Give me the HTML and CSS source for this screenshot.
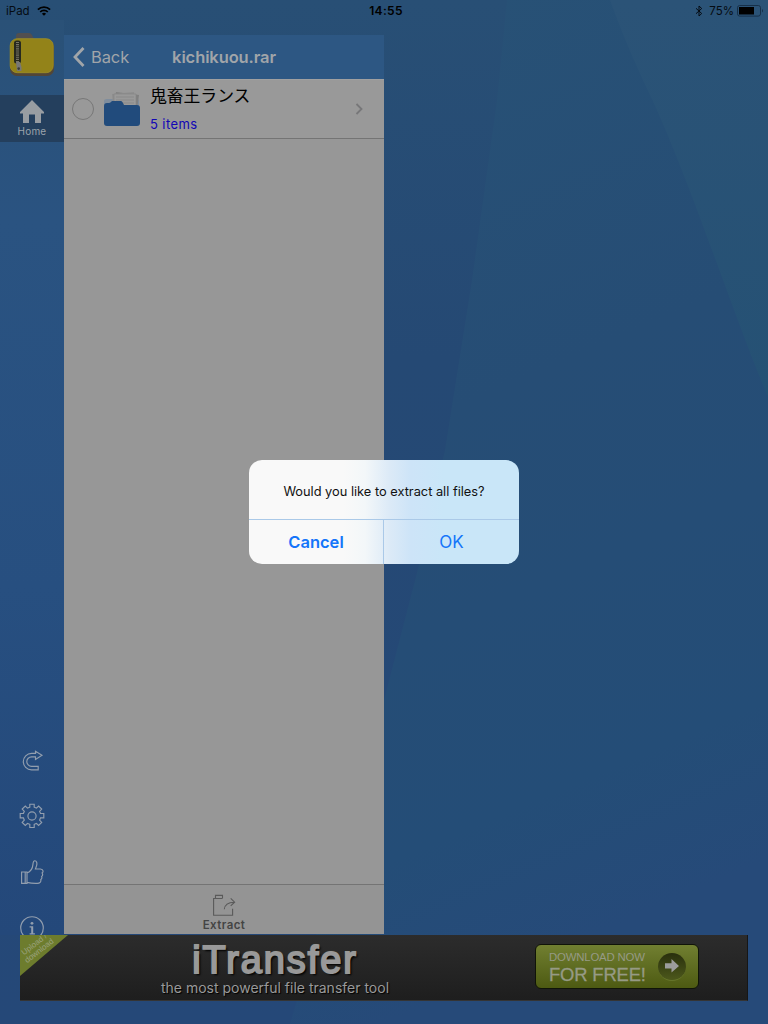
FILE: index.html
```html
<!DOCTYPE html>
<html lang="en">
<head>
<meta charset="utf-8">
<title>Archive browser</title>
<link rel="stylesheet" href="styles.css">
</head>
<body>
<div class="screen">
  <svg class="wallpaper" viewBox="0 0 768 1024" preserveAspectRatio="none">
    <defs>
      <linearGradient id="base" x1="0" y1="0" x2="0" y2="1"><stop offset="0" stop-color="#284f75"/><stop offset=".35" stop-color="#254974"/><stop offset="1" stop-color="#254878"/></linearGradient>
      <linearGradient id="mid" x1="0" y1="0" x2=".2" y2="1"><stop offset="0" stop-color="#285276"/><stop offset=".45" stop-color="#264d75"/><stop offset=".85" stop-color="#244d77"/><stop offset="1" stop-color="#264a79"/></linearGradient>
      <linearGradient id="corner" x1="0" y1="0" x2="0" y2="1"><stop offset="0" stop-color="#2b5377"/><stop offset="1" stop-color="#255174"/></linearGradient>
    </defs>
    <rect width="768" height="1024" fill="url(#base)"/>
    <path d="M507 0H768V1024H290L384 700L419 565L445 450L472 280L497 100Z" fill="url(#mid)"/>
    <path d="M610 0H768V397C735 320 690 180 650 95C632 57 620 28 610 0Z" fill="url(#corner)"/>
  </svg>

  <header class="status">
    <div class="status-side">
      <span>iPad</span>
      <svg class="wifi" width="14" height="10" viewBox="0 0 14 10" fill="none" stroke="#000"><path d="M.9 3.7a8.6 8.6 0 0 1 12.2 0" stroke-width="1.8"/><path d="M3.2 6a5.4 5.4 0 0 1 7.6 0" stroke-width="1.7"/><path d="M4.9 7.7a3 3 0 0 1 4.2 0L7 9.8Z" fill="#000" stroke="none"/></svg>
    </div>
    <span class="clock">14:55</span>
    <div class="status-side status-right">
      <svg width="8" height="12" viewBox="0 0 8 12" fill="none" stroke="#050b12"><path d="M1 3.3 6.7 8.5 4 11V1l2.7 2.5L1 8.7"/></svg>
      <span class="percent">75%</span>
      <svg width="27" height="12" viewBox="0 0 27 12"><rect x=".5" y=".5" width="23" height="10.6" rx="2.2" fill="none" stroke="#173049"/><rect x="2" y="2" width="15" height="7.5" fill="#000"/><path d="M25 4c1.3.5 1.3 3 0 3.5Z" fill="#173049"/></svg>
    </div>
  </header>

  <main class="main">
    <nav class="sidebar">
      <svg class="app-icon" width="46" height="44" viewBox="0 0 46 44">
        <path d="M7 9V4Q7 1 10 1h10q2 0 3 2l2 4v4Z" fill="#514f50"/>
        <rect x="1" y="8" width="44" height="36" rx="7" fill="#524637"/>
        <rect x="1.2" y="6.7" width="43" height="34" rx="7" fill="#938319" stroke="#a09126" stroke-width=".8"/>
        <rect x="5" y="8.5" width="7" height="23" rx="2.5" fill="#27291f"/>
        <path d="M8.5 10v20" stroke="#777464" stroke-width="3" stroke-dasharray="1 .9"/>
        <path d="M7 30h4l1.5 5v4H8Z" fill="#777"/><circle cx="9.7" cy="36.6" r="1.3" fill="#3a3b35"/>
      </svg>
      <div class="home">
        <svg width="26" height="25" viewBox="0 0 26 25"><path d="M13 1 1 13v1.5h3V24h6v-8.5h6V24h6v-9.5h3V13Z" fill="#989da2"/></svg>
        <span>Home</span>
      </div>
      <div class="tools">
        <svg width="24" height="24" viewBox="0 0 24 24"><path d="M15.5 2.2v2.2H11.5a8.2 8.2 0 0 0 0 16.4h6.7v-3.5h-6.7a4.7 4.7 0 0 1 0-9.4h4v2.5l6.5-4.1Z"/></svg>
        <svg width="26" height="26" viewBox="0 0 26 26"><path d="M10.8 1.2h4.4v3l2.2.9 2.2-2.1 3.1 3.1-2.1 2.2.9 2.2h3.3v4.4h-3.3l-.9 2.3 2.1 2.2-3.1 3.1-2.2-2.1-2.2.9v3.2h-4.4v-3.2l-2.3-.9-2.2 2.1-3.1-3.1 2.1-2.2-.9-2.3H1.2v-4.4h3.2l.9-2.2L3.2 6.1 6.3 3l2.2 2.1 2.3-.9Z"/><circle cx="13" cy="13" r="4.1"/></svg>
        <svg width="24" height="26" viewBox="0 0 24 26"><path d="M1.6 13H7v11.4H1.6ZM5.2 13v11.4M7 14c3.5-1.4 5.6-4.6 5.9-8.4.2-2.6.8-3.9 2-3.9 1.7 0 2.4 2.6 1.7 4.9L15.4 10h5c3.4.4 3 3.1 1.7 4 .8 1.3.4 2.8-.5 3.4.6 1.5.1 2.6-.8 3.2.4 2.4-1 3.8-3.5 3.8-4.8.2-7.1-.2-10.3-1"/></svg>
        <div class="info-clip"><svg width="26" height="26" viewBox="0 0 26 26"><circle cx="13" cy="13" r="11.3"/><circle class="solid" cx="13" cy="8.3" r="1.4"/><path class="solid" d="M10.6 11.3h3.6v7h1.7v1.1h-5.3v-1.1h1.6v-5.9h-1.6Z"/></svg></div>
      </div>
    </nav>

    <section class="panel">
      <div class="navbar">
        <div class="back"><svg width="14" height="22" viewBox="0 0 14 22"><path d="M11.5 2 3 11l8.5 9" fill="none" stroke="#a1a5a9" stroke-width="2.8"/></svg><span>Back</span></div>
        <h1>kichikuou.rar</h1>
      </div>
      <div class="row">
        <span class="check"></span>
        <svg class="folder" width="36" height="36" viewBox="0 0 36 36">
          <path d="M0 10Q0 8 3 8h30q2 0 2 3v9H0Z" fill="#7f8d9d"/>
          <path d="m12 1 23 3-2 14-23-3Z" fill="#808080"/><path d="M8 3 30 1l1 13H9Z" fill="#8e8e8e"/><path d="M10 3h22v14H10Z" fill="#999" stroke="#858585" stroke-width=".6"/>
          <path d="M12 6h18M12 9h18M12 12h18" stroke="#858585" stroke-width=".7"/>
          <path d="M0 15q0-3 3-3h2q1 0 2-1l1-1h9q1 0 2 2l1 2h13q3 0 3 3v15q0 3-3 3H3q-3 0-3-3Z" fill="#214b7c"/>
        </svg>
        <div class="file"><span class="file-name">鬼畜王ランス</span><span class="count">5 items</span></div>
        <svg class="chevron" width="9" height="14" viewBox="0 0 9 14"><path d="m1.5 2 5 5-5 5" fill="none" stroke="#777779" stroke-width="1.8"/></svg>
      </div>
      <div class="list"></div>
      <div class="toolbar">
        <svg width="24" height="23" viewBox="0 0 24 23" fill="none" stroke="#5a5a5a" stroke-width="1.1"><path d="M10.5 4.5H1.6v16.7h19v-6.5M3.5 4.3V1.4h7v2.9M12.3 15.3c.4-4.6 3.4-7 10-7.1M18.7 4.4l3.9 3.8-3.9 3.7"/></svg>
        <span>Extract</span>
      </div>
    </section>
  </main>

  <aside class="ad">
    <div class="ribbon"><span>Upload /<br>download</span></div>
    <div class="brand"><strong>iTransfer</strong><span>the most powerful file transfer tool</span></div>
    <div class="download">
      <div class="download-text"><span>DOWNLOAD NOW</span><b>FOR FREE!</b></div>
      <div class="arrow"><svg width="14" height="14" viewBox="0 0 14 14"><path d="M0 4.3h6.5V0L14 7l-7.5 6.5V9.5H0Z" fill="#9c9c9c"/></svg></div>
    </div>
  </aside>

  <div class="alert">
    <p>Would you like to extract all files?</p>
    <div class="actions"><button class="cancel">Cancel</button><button>OK</button></div>
  </div>
</div>
</body>
</html>
```
FILE: styles.css
```css
* { box-sizing: border-box; }
body { margin: 0; font-family: Inter, "Noto Sans CJK JP", sans-serif; }
.screen { position: relative; width: 768px; height: 1024px; overflow: hidden; display: flex; flex-direction: column; isolation: isolate; }
.wallpaper { position: absolute; inset: 0; width: 768px; height: 1024px; z-index: -1; }

.status { height: 20px; display: grid; grid-template-columns: 1fr auto 1fr; align-items: center; padding: 1px 6px 0 6px; font-size: 11.5px; color: #050b12; }
.status-side { display: flex; align-items: center; }
.wifi { margin-left: 7px; }
.status-right { justify-content: flex-end; }
.percent { margin: 0 3px 0 6px; }
.status-right svg:last-child { margin-right: -2px; }
.clock { font-weight: 600; font-size: 12px; letter-spacing: .3px; color: #000; padding-left: 4px; }

.main { height: 915px; display: flex; }
.sidebar { width: 64px; display: flex; flex-direction: column; align-items: center; padding-top: 12px; background: linear-gradient(#2a5177, #2a5381 22%, #274f80 62%, #24487a); }
.app-icon { display: block; margin-right: 1px; }
.home { width: 64px; height: 47px; margin-top: 19px; background: #243f5d; display: flex; flex-direction: column; align-items: center; padding-top: 4px; color: #9ba3ab; font-size: 10px; line-height: 12px; letter-spacing: .2px; }
.home svg { display: block; margin-bottom: 1px; }
.tools { margin-top: auto; display: flex; flex-direction: column; align-items: center; }
.tools svg { display: block; fill: none; stroke: #929eae; stroke-width: 1.15; }
.tools > svg { margin-bottom: 30px; }
.tools svg .solid { fill: #929eae; stroke: none; }
.info-clip { height: 20px; overflow: hidden; }

.panel { width: 320px; height: 899px; margin-top: 15px; background: #979797; display: flex; flex-direction: column; }
.navbar { height: 44px; background: #2d5783; display: grid; grid-template-columns: 1fr auto 1fr; align-items: center; padding: 0 8px; color: #a1a5a9; }
.back { display: flex; align-items: center; gap: 5px; font-size: 16.5px; letter-spacing: -.1px; }
h1 { margin: 0; font-size: 16.5px; font-weight: 600; letter-spacing: -.1px; }
.row { height: 60px; display: flex; align-items: center; padding: 0 20px 0 8px; border-top: 1px solid #a0a0a0; border-bottom: 1px solid #747474; background: #999; }
.check { width: 22px; height: 22px; border: 1px solid #777; border-radius: 50%; }
.folder { margin: 0 10px 0 10px; }
.file { display: flex; flex-direction: column; flex: 1; }
.file-name { font-family: "Noto Sans CJK JP", sans-serif; font-size: 16.8px; line-height: 24px; font-weight: 400; color: #000; }
.count { color: #1106b5; font-size: 13px; line-height: 22px; letter-spacing: .4px; margin-top: 6px; }
.chevron { display: block; }
.list { flex: 1; }
.toolbar { height: 50px; border-top: 1px solid #747474; background: #949494; display: flex; flex-direction: column; align-items: center; padding-top: 9px; }
.toolbar svg { display: block; margin-bottom: 1px; }
.toolbar span { font-size: 11.5px; line-height: 14px; font-weight: 600; color: #444; letter-spacing: .45px; }

.ad { width: 728px; height: 66px; margin-left: 20px; display: flex; background: linear-gradient(#2c2c2c, #1e1e1e); border-right: 1px solid #161616; border-bottom: 1px solid #343434; }
.ribbon { width: 48px; height: 41px; clip-path: polygon(0 0, 100% 0, 0 100%); background: #6d7c2d; color: #9aa27d; }
.ribbon span { display: block; width: 40px; margin: 5px 0 0 -3px; text-align: center; font-size: 8px; line-height: 8px; transform: rotate(-38deg); font-family: "Liberation Sans", sans-serif; }
.brand { width: 260px; margin-left: 77px; display: flex; flex-direction: column; align-items: center; color: #999; font-family: "Liberation Sans", Arial, sans-serif; }
.brand strong { font-size: 38px; line-height: 38px; margin-top: 6px; font-weight: 400; letter-spacing: 1.9px; -webkit-text-stroke: 1.8px #999; text-shadow: 2px 2px 2px #000, 0 0 2px #7a7a45; }
.brand span { font-size: 14px; line-height: 18px; font-family: Inter, sans-serif; text-shadow: 1px 1px 1px #000; white-space: nowrap; }
.download { width: 164px; height: 45px; margin: 9px 0 0 130px; border: 1px solid #101408; border-radius: 6px; background: linear-gradient(#717f31, #4d5a12); display: flex; align-items: center; padding: 0 12px 0 13px; font-family: "Liberation Sans", Arial, sans-serif; color: #969a85; }
.download-text { flex: 1; display: flex; flex-direction: column; white-space: nowrap; padding-top: 2px; }
.download-text span { font-size: 11.4px; line-height: 13px; letter-spacing: -.2px; }
.download-text b { font-size: 18.4px; line-height: 21px; font-weight: 400; letter-spacing: -.15px; -webkit-text-stroke: .3px #969a85; }
.arrow { width: 28px; height: 28px; border-radius: 50%; background: linear-gradient(#292f0d, #4c581b); border-bottom: 1px solid #66752b; display: flex; align-items: center; justify-content: center; }

.alert { position: absolute; left: 249px; top: 460px; width: 270px; height: 104px; border-radius: 13px; overflow: hidden; background: linear-gradient(90deg, #f9f9f9 35%, #f3f7f9 43%, #dceaf7 52%, #cde4f8 60%, #c9e6f8 72%); }
.alert p { height: 59px; margin: 0; padding-top: 4px; display: flex; align-items: center; justify-content: center; font-size: 12.8px; color: #111; }
.actions { height: 45px; display: grid; grid-template-columns: 1fr 1fr; border-top: 1px solid #aac9e8; }
.actions button { border: 0; padding: 0; background: none; font: 400 17px Inter, sans-serif; color: #1475fa; }
.actions .cancel { font-weight: 600; font-size: 16.5px; border-right: 1px solid #aac9e8; }
```
